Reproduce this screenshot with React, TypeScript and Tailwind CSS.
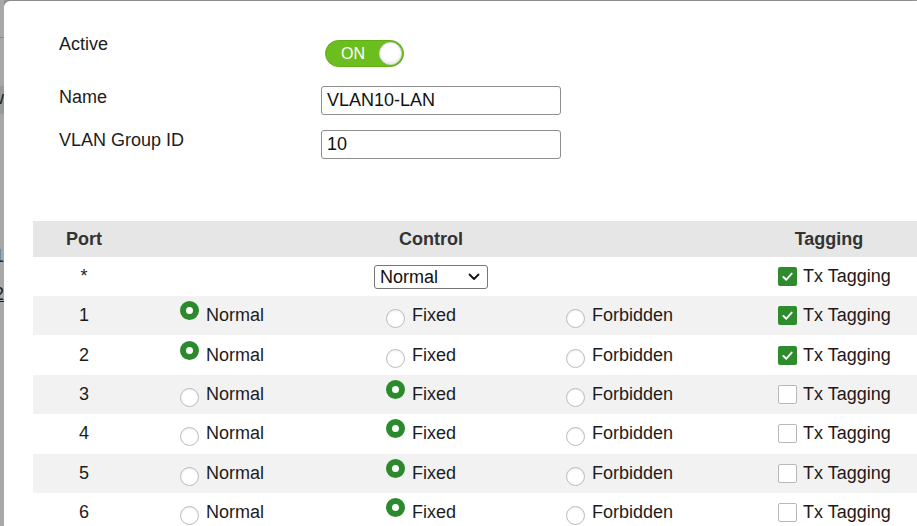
import React from "react";

type Mode = "Normal" | "Fixed" | "Forbidden";

const rows: { port: string; mode: Mode; tag: boolean }[] = [
  { port: "1", mode: "Normal", tag: true },
  { port: "2", mode: "Normal", tag: true },
  { port: "3", mode: "Fixed", tag: false },
  { port: "4", mode: "Fixed", tag: false },
  { port: "5", mode: "Fixed", tag: false },
  { port: "6", mode: "Fixed", tag: false },
];

function Radio({ on, label }: { on: boolean; label: string }) {
  return (
    <div className="flex items-center gap-[7px]">
      {on ? (
        <span className="block w-[19px] h-[19px] rounded-full border-[6px] border-[#2b8a2b] bg-white -translate-y-[5px] shrink-0" />
      ) : (
        <span className="block w-[19px] h-[19px] rounded-full border-[1.5px] border-[#bcbcbc] bg-white shadow-[inset_0_1px_2px_rgba(0,0,0,0.08)] translate-y-[3px] shrink-0" />
      )}
      <span>{label}</span>
    </div>
  );
}

function Check({ on }: { on: boolean }) {
  return (
    <div className="flex items-center gap-[6px]">
      {on ? (
        <span className="flex items-center justify-center w-[19px] h-[19px] rounded-[2px] bg-[#2e8b2e] shrink-0">
          <svg width="13" height="13" viewBox="0 0 14 14">
            <path d="M2.5 7.5 L5.7 10.5 L11.5 3.8" fill="none" stroke="white" strokeWidth="2" strokeLinecap="round" strokeLinejoin="round" />
          </svg>
        </span>
      ) : (
        <span className="block w-[19px] h-[19px] rounded-[2px] border-[1.5px] border-[#b8b8b8] bg-white shrink-0" />
      )}
      <span className="text-[#241818]">Tx Tagging</span>
    </div>
  );
}

export default function App() {
  return (
    <div className="w-[917px] h-[526px] overflow-hidden flex bg-[#a4a4a4] font-['Liberation_Sans',Arial,sans-serif] text-[18px] text-[#1c1c1c]">
      {/* background page peeking behind the dialog */}
      <div className="relative w-[4px] shrink-0 overflow-hidden bg-[#a8a8a8]">
        <div className="absolute left-0 top-[37px] w-full h-px bg-[#8c8c8c]" />
        <div className="absolute left-0 top-[86px] w-full h-[28px] bg-[#999]" />
        <span className="absolute right-0 top-[88px] leading-[21px] text-[#222]">w</span>
        <span className="absolute right-0 top-[246px] leading-[21px] text-[#222]">1</span>
        <span className="absolute right-0 top-[284px] leading-[21px] text-[#222] underline">2</span>
      </div>

      <div className="flex-1 mt-[1px] bg-white rounded-tl-[6px] overflow-hidden shadow-[-2px_0_4px_rgba(0,0,0,0.35)] pt-[33px]">
        {/* form */}
        <div className="pl-[55px] flex flex-col">
          <div className="flex items-start h-[33px]">
            <div className="w-[262px] leading-[21px]">Active</div>
            <div className="relative w-[79px] h-[27px] mt-[6px] ml-[4px] rounded-full bg-[#6cbd1e] border border-[#5fae16]">
              <span className="absolute left-[15px] top-[3px] text-[16px] leading-[19px] text-white">ON</span>
              <span className="absolute right-[1px] top-[1px] w-[23px] h-[23px] rounded-full bg-white border border-[#d6d6d6] shadow-[inset_0_-2px_3px_rgba(0,0,0,0.08)]" />
            </div>
          </div>
          <div className="flex items-start mt-[19px]">
            <div className="w-[262px] leading-[21px] pt-[1px]">Name</div>
            <input
              readOnly
              value="VLAN10-LAN"
              className="w-[240px] h-[29px] border border-[#8e8e8e] rounded-[3px] px-[5px] text-[18px] text-[#111] outline-none"
            />
          </div>
          <div className="flex items-start mt-[15px]">
            <div className="w-[262px] leading-[21px]">VLAN Group ID</div>
            <input
              readOnly
              value="10"
              className="w-[240px] h-[29px] border border-[#8e8e8e] rounded-[3px] px-[5px] text-[18px] text-[#111] outline-none"
            />
          </div>
        </div>

        {/* table */}
        <div className="ml-[29px] mt-[62px] w-[900px]">
          <div className="flex items-center h-[36px] bg-[#e6e6e6] font-bold text-[#333]">
            <div className="w-[102px] text-center">Port</div>
            <div className="w-[592px] text-center">Control</div>
            <div className="w-[204px] text-center">Tagging</div>
          </div>

          <div className="flex items-center h-[39px] bg-white">
            <div className="w-[102px] text-center">*</div>
            <div className="w-[592px] flex justify-center">
              <div className="flex items-center justify-between w-[114px] h-[24px] border border-[#767676] rounded-[3px] pl-[5px] pr-[7px] leading-[20px] text-[#111]">
                <span>Normal</span>
                <svg width="12" height="8" viewBox="0 0 12 8">
                  <path d="M1.5 1.5 L6 6 L10.5 1.5" fill="none" stroke="#111" strokeWidth="1.8" strokeLinecap="round" strokeLinejoin="round" />
                </svg>
              </div>
            </div>
            <div className="flex-1 pl-[51px]">
              <Check on={true} />
            </div>
          </div>

          {rows.map((r, i) => (
            <div
              key={r.port}
              className={`flex items-center h-[39.4px] ${i % 2 === 0 ? "bg-[#f2f2f2]" : "bg-white"}`}
            >
              <div className="w-[102px] text-center">{r.port}</div>
              <div className="w-[251px] pl-[45px]">
                <Radio on={r.mode === "Normal"} label="Normal" />
              </div>
              <div className="w-[180px]">
                <Radio on={r.mode === "Fixed"} label="Fixed" />
              </div>
              <div className="w-[212px]">
                <Radio on={r.mode === "Forbidden"} label="Forbidden" />
              </div>
              <div className="flex-1">
                <Check on={r.tag} />
              </div>
            </div>
          ))}
        </div>
      </div>
    </div>
  );
}
